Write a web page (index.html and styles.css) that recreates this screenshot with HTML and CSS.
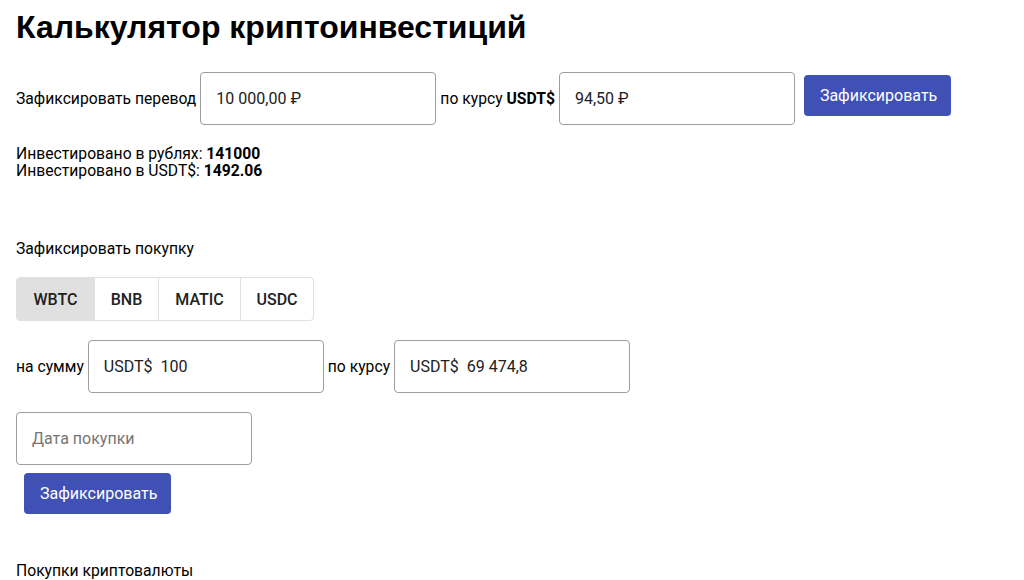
FILE: index.html
```html
<!DOCTYPE html>
<html lang="ru">
<head>
<meta charset="utf-8">
<link rel="stylesheet" href="styles.css">
</head>
<body>
<div class="page">
  <h1 class="title">Калькулятор криптоинвестиций</h1>

  <div class="row row-transfer">
    <span class="label">Зафиксировать перевод</span>
    <div class="field"><span class="value">10 000,00 ₽</span></div>
    <span class="label">по курсу <b>USDT$</b></span>
    <div class="field"><span class="value">94,50 ₽</span></div>
    <button class="btn btn-top">Зафиксировать</button>
  </div>

  <div class="stats">
    <div>Инвестировано в рублях: <b>141000</b></div>
    <div>Инвестировано в USDT$: <b>1492.06</b></div>
  </div>

  <div class="section-label">Зафиксировать покупку</div>

  <div class="toggle">
    <span class="seg seg-active">WBTC</span>
    <span class="seg">BNB</span>
    <span class="seg">MATIC</span>
    <span class="seg">USDC</span>
  </div>

  <div class="row row-buy">
    <span class="label">на сумму</span>
    <div class="field"><span class="value">USDT$&nbsp; 100</span></div>
    <span class="label">по курсу</span>
    <div class="field"><span class="value">USDT$&nbsp; 69 474,8</span></div>
  </div>

  <div class="field field-date"><span class="placeholder">Дата покупки</span></div>

  <button class="btn btn-bottom">Зафиксировать</button>

  <div class="section-label section-last">Покупки криптовалюты</div>
</div>
</body>
</html>
```

FILE: styles.css
```css
* { box-sizing: border-box; }
html, body { margin: 0; padding: 0; background: #fff; }
body {
  font-family: Roboto, "Liberation Sans", sans-serif;
  color: #000;
  font-size: 16px;
}
.page { padding: 0 16px; }
.title {
  margin: 0;
  padding-top: 8px;
  font-family: "Liberation Sans", Arial, sans-serif;
  font-size: 32px;
  font-weight: 700;
  line-height: 38px;
}
.row {
  display: flex;
  align-items: center;
  gap: 4px;
}
.row-transfer { margin-top: 26px; }
.label { font-size: 15.7px; white-space: nowrap; }
.label b { font-weight: 700; }
.field {
  width: 236px;
  height: 53px;
  border: 1px solid #9e9e9e;
  border-radius: 4px;
  display: flex;
  align-items: center;
  padding: 0 15px;
  font-size: 16px;
  color: #212121;
  background: #fff;
}
.placeholder { color: #757575; }
.btn {
  background: #3f51b5;
  color: #fff;
  border: none;
  border-radius: 4px;
  font-family: Roboto, "Liberation Sans", sans-serif;
  font-size: 16px;
  height: 41px;
  padding: 0 16px;
  width: 147px;
}
.btn-top { margin-left: 5px; align-self: flex-start; margin-top: 3px; }
.stats {
  margin-top: 20px;
  font-size: 15.7px;
  line-height: 17px;
}
.section-label {
  margin-top: 61px;
  font-size: 15.7px;
  line-height: 18px;
}
.toggle {
  margin-top: 19px;
  display: inline-flex;
  border: 1px solid #e0e0e0;
  border-radius: 4px;
  height: 44px;
  overflow: hidden;
}
.seg {
  display: flex;
  align-items: center;
  justify-content: center;
  font-size: 16px;
  font-weight: 500;
  color: #212121;
  border-left: 1px solid #e0e0e0;
}
.seg:first-child { border-left: none; }
.seg:nth-child(1) { width: 77px; }
.seg:nth-child(2) { width: 64px; }
.seg:nth-child(3) { width: 82px; }
.seg:nth-child(4) { width: 73px; }
.seg-active { background: #e0e0e0; }
.row-buy { margin-top: 19px; }
.field-date { margin-top: 19px; }
.btn-bottom { margin-top: 8px; margin-left: 8px; display: block; }
.section-last { margin-top: 48px; }
```
